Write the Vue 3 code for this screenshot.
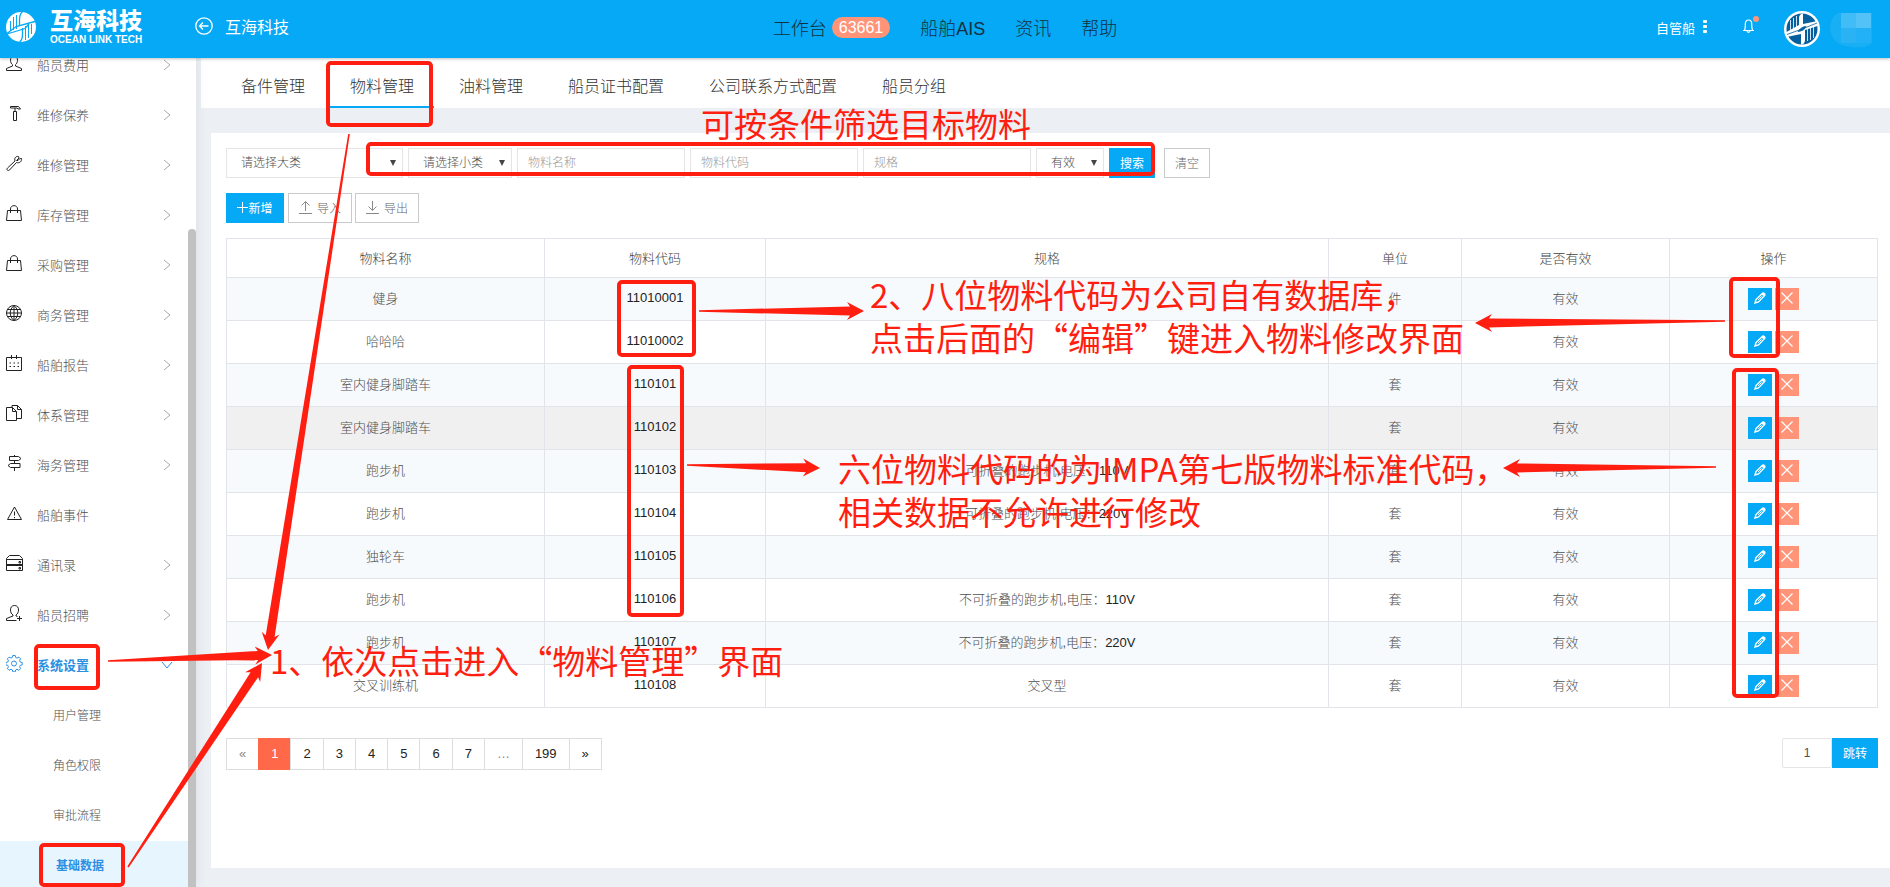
<script setup>
import { ref } from 'vue'

const menu = [
  { icon: 'user', label: '船员费用', arrow: true },
  { icon: 'hammer', label: '维修保养', arrow: true },
  { icon: 'wrench', label: '维修管理', arrow: true },
  { icon: 'bag', label: '库存管理', arrow: true },
  { icon: 'bag', label: '采购管理', arrow: true },
  { icon: 'globe', label: '商务管理', arrow: true },
  { icon: 'calendar', label: '船舶报告', arrow: true },
  { icon: 'files', label: '体系管理', arrow: true },
  { icon: 'sign', label: '海务管理', arrow: true },
  { icon: 'warning', label: '船舶事件', arrow: false },
  { icon: 'drawer', label: '通讯录', arrow: true },
  { icon: 'useradd', label: '船员招聘', arrow: true },
]
const submenu = ['用户管理', '角色权限', '审批流程', '基础数据']

const icons = {
  user: 'M8 1.5C5.6 1.5 4.5 3 4.5 5.2c0 2 .8 3.600 2 4.500v1.300L.5 13.500v2h15v-2l-6-2.500V9.700c1.200-.9 2-2.500 2-4.500 0-2.200-1.100-3.700-3.500-3.700z',
  hammer: 'M4.500 1.500h8l2 2.500h-2.500l-1-1h-6.500zM7.500 6.500h3v9h-3zM9 3v3.500',
  wrench: 'M10.500 5.500l2.500-2.500-.5-1.500c-2.500-.5-4.500 1.500-3.500 4.500l-7.500 7c-1.500 1.700.5 3.500 2 2l7-7.500c3 1 5.500-1 5-4l-2 .3-1.500 1.700z',
  bag: 'M1.500 5.500h13l1 10H.5zM4.500 8V4C4.500-.5 11.500-.5 11.500 4V8',
  globe: 'M8 .5a7.500 7.500 0 1 0 0 15a7.500 7.500 0 1 0 0-15zM.5 8h15M8 .5v15M8 .5c-5 4-5 11 0 15c5-4 5-11 0-15M1.500 4.500h13M1.500 11.500h13',
  calendar: 'M.5 2.500h15v13H.5zM5.500 0v4M10.500 0v4M3.500 8h1.500M7.500 8H9M11.500 8H13M3.500 11.500h1.500M7.500 11.500H9M11.500 11.500H13',
  files: 'M.5 2.500h6l4 4v9H.5zM6.500 2.500v4h4M6 2.500V.5h5.500l4 4v9h-5M11.500 .5v4h4',
  sign: 'M8.500 0v1.500M3.500 1.500h9l2.500 2l-2.500 2h-9zM8.500 5.500v3M4.500 8.500h9.500v4H4.500l-2.500-2zM8.500 12.500V16',
  warning: 'M8.500 2l7 12.500h-14zM8.500 6.500v4M8.500 12v1.200',
  drawer: 'M3.500 .5h10l3 3v12H.5v-12zM.5 4.500h16M.5 9.500h16M.5 10.500h16M13 6.500h1.500v1.500H13zM13 12.500h1.500V14H13z',
  useradd: 'M8.500 .5C5.600 .5 4.500 2.500 4.500 5c0 2.500 1 4 2.500 5v1L.5 13.500v2h10M8.500 .5c2.900 0 4 2 4 4.500 0 2.500-1 4-2.500 5v1l1.500 .5M13.500 11v5M11 13.500h5',
}

const tabs = ['备件管理', '物料管理', '油料管理', '船员证书配置', '公司联系方式配置', '船员分组']
const fields = ['物料名称', '物料代码', '规格']
const rows = [
  ['健身', '11010001', '', '', '件'],
  ['哈哈哈', '11010002', '', '', ''],
  ['室内健身脚踏车', '110101', '', '', '套'],
  ['室内健身脚踏车', '110102', '', '', '套'],
  ['跑步机', '110103', '可折叠的跑步机,电压：', '110V', '套'],
  ['跑步机', '110104', '可折叠的跑步机,电压：', '220V', '套'],
  ['独轮车', '110105', '', '', '套'],
  ['跑步机', '110106', '不可折叠的跑步机,电压：', '110V', '套'],
  ['跑步机', '110107', '不可折叠的跑步机,电压：', '220V', '套'],
  ['交叉训练机', '110108', '交叉型', '', '套'],
]
const pages = ['«', '1', '2', '3', '4', '5', '6', '7', '…', '199', '»']
const page = ref(1)

// Highlight frames as [left, top, right, bottom]
const frames = [
  [326, 61, 433, 127],
  [366, 142, 1155, 176],
  [617, 280, 696, 357],
  [627, 365, 684, 617],
  [1729, 277, 1780, 358],
  [1732, 368, 1779, 698],
  [34, 644, 100, 690],
  [39, 843, 125, 887],
]

// Tapered arrow from a tail point to a tip
function arrow([x1, y1, x2, y2]) {
  const len = Math.hypot(x2 - x1, y2 - y1)
  const ux = (x2 - x1) / len
  const uy = (y2 - y1) / len
  const at = (back, side) =>
    `${(x2 - ux * back - uy * side).toFixed(1)},${(y2 - uy * back + ux * side).toFixed(1)}`
  return [at(len, 0.8), at(14, 4.5), at(17, 9), at(0, 0), at(17, -9), at(14, -4.5), at(len, -0.8)].join(' ')
}
const arrows = [
  [349, 134, 268, 650],
  [108, 661, 272, 655],
  [128, 867, 262, 663],
  [699, 311, 864, 311],
  [687, 465, 820, 468],
  [1725, 321, 1475, 323],
  [1716, 467, 1503, 468],
].map(arrow)

const notes = [
  [701, 137, '可按条件筛选目标物料'],
  [870, 308, '2、八位物料代码为公司自有数据库，'],
  [870, 351, '点击后面的“编辑”键进入物料修改界面'],
  [838, 482, '六位物料代码的为IMPA第七版物料标准代码，'],
  [838, 525, '相关数据不允许进行修改'],
  [270, 674, '1、依次点击进入“物料管理”界面'],
]
</script>

<template>
  <div class="page">
    <header class="top">
      <div class="top-left">
        <a class="brand" href="#">
          <svg class="brand-mark" viewBox="0 0 30 30" width="30" height="30" aria-hidden="true">
            <circle cx="15" cy="15" r="15" fill="#fff" />
            <g fill="none" stroke="#06a9f6">
              <path d="M4.500 9v10M7.500 5v13M10.500 3v14M19.500 14v14M22.500 13v13M25.500 12v10" />
              <path d="M16.500 0C13 2 13.500 6 13.500 10v3.500M13.500 30C17 28 16.500 24 16.500 20v-4" stroke-width="1.300" />
              <path d="M1 21.500L10 14.500 29 9.500M1 22l18-5.500 4-4.500" stroke-width="1.300" />
            </g>
          </svg>
          <span class="brand-text">
            <strong>互海科技</strong>
            <small>OCEAN LINK TECH</small>
          </span>
        </a>
        <button class="back" type="button" aria-label="返回">
          <svg viewBox="0 0 18 18" width="18" height="18" fill="none" stroke="#fff" stroke-width="1.300">
            <circle cx="9" cy="9" r="8.200" />
            <path d="M13.500 9h-9M8 5.500L4.500 9L8 12.500" />
          </svg>
        </button>
        <b class="company">互海科技</b>
      </div>
      <nav class="top-nav">
        <a href="#">工作台<span class="badge">63661</span></a>
        <a href="#">船舶AIS</a>
        <a href="#">资讯</a>
        <a href="#">帮助</a>
      </nav>
      <div class="top-right">
        <button class="fleet" type="button">
          自管船
          <svg viewBox="0 0 4 14" width="4" height="14" fill="#fff">
            <rect y="0" width="4" height="3" rx="1" /><rect y="5" width="4" height="3" rx="1" /><rect y="10" width="4" height="3" rx="1" />
          </svg>
        </button>
        <button class="bell" type="button" aria-label="通知">
          <svg viewBox="0 0 18 18" width="18" height="18" fill="none">
            <path d="M2 14.500h11M3.500 14.500c1-2 .8-4 .8-6C4.300 5.500 5.500 4 7.500 4s3.300 1.500 3.300 4.500c0 2-.2 4 .8 6M6 15c.3 1.700 2.700 1.700 3 0" stroke="#fff" stroke-width="1.200" />
            <circle cx="15" cy="3" r="3" fill="#ff9478" />
          </svg>
        </button>
        <a class="avatar" href="#" aria-label="账户">
          <svg viewBox="0 0 36 36" width="36" height="36">
            <circle cx="18" cy="18" r="18" fill="#fff" />
            <circle cx="18" cy="18" r="15.500" fill="#075f9e" />
            <path d="M6.500 9v14M9.500 7v14M12.500 5v15M23.500 16v14M26.500 15v14M29.500 14v13" stroke="#cfe2ef" />
            <path d="M15 7c0-3 2-4.500 4-4.500V13l14.500-3v5L21 19v10c0 3-2 4.500-4 4.500V23L2.500 26v-5L15 14z" fill="#fff" />
            <path d="M3 23.500l15-5.500M18 18l15-6M14 20.500c4-.5 7-2 8-5-3 0-6 2-8 5z" fill="#075f9e" stroke="#075f9e" stroke-width=".8" />
          </svg>
        </a>
        <svg class="mosaic" viewBox="0 0 50 40" width="50" height="40" aria-hidden="true">
          <path d="M8 4h34v30c-6 6-20 5-30 2C-3 31-3 10 8 4z" fill="#19aff5" />
          <rect x="11" y="4" width="15" height="15" fill="#42bcf7" />
          <rect x="26" y="4" width="15" height="15" fill="#52c2f7" />
          <rect x="11" y="19" width="15" height="15" fill="#2ab2f5" />
          <rect x="26" y="19" width="15" height="15" fill="#22b0f6" />
        </svg>
      </div>
    </header>

    <div class="body">
      <aside class="side">
        <ul class="menu">
          <li v-for="m in menu" :key="m.label">
            <a href="#">
              <svg class="icon" viewBox="0 0 17 17" width="17" height="17"><path :d="icons[m.icon]" /></svg>
              <span>{{ m.label }}</span>
              <svg v-if="m.arrow" class="chev" viewBox="0 0 8 12" width="8" height="12"><path d="M1 1l6 5-6 5" /></svg>
            </a>
          </li>
          <li>
            <a href="#" class="open">
              <svg class="icon" viewBox="0 0 17 17" width="17" height="17">
                <path d="M6.800 .5h2.400l.5 2 1.300.6 1.900-1 1.700 1.700-1 1.900.6 1.300 2 .5v2.400l-2 .5-.6 1.300 1 1.900-1.700 1.700-1.900-1-1.300.6-.5 2H6.800l-.5-2-1.300-.6-1.900 1-1.700-1.700 1-1.900-.6-1.300-2-.5V7.500l2-.5.600-1.300-1-1.900L3.100 2.100l1.900 1 1.300-.6z" />
                <circle cx="8" cy="8.500" r="2.500" />
              </svg>
              <span>系统设置</span>
              <svg class="chev down" viewBox="0 0 12 8" width="12" height="8"><path d="M1 1l5 6 5-6" /></svg>
            </a>
            <ul class="submenu">
              <li v-for="s in submenu" :key="s">
                <a href="#" :class="{ current: s === '基础数据' }">{{ s }}</a>
              </li>
            </ul>
          </li>
        </ul>
        <div class="thumb"></div>
      </aside>

      <main class="main">
        <nav class="tabs">
          <a v-for="t in tabs" :key="t" href="#" :class="{ on: t === '物料管理' }">{{ t }}</a>
        </nav>
        <section class="card">
          <form class="filters" @submit.prevent>
            <div class="select wide">
              <select aria-label="大类"><option>请选择大类</option></select>
              <svg viewBox="0 0 6 6" width="6" height="6"><path d="M0 0h6L3 6z" /></svg>
            </div>
            <div class="select mid">
              <select aria-label="小类"><option>请选择小类</option></select>
              <svg viewBox="0 0 6 6" width="6" height="6"><path d="M0 0h6L3 6z" /></svg>
            </div>
            <input v-for="f in fields" :key="f" type="text" :placeholder="f" :aria-label="f" />
            <div class="select small">
              <select aria-label="是否有效"><option>有效</option></select>
              <svg viewBox="0 0 6 6" width="6" height="6"><path d="M0 0h6L3 6z" /></svg>
            </div>
            <button class="btn primary" type="submit">搜索</button>
            <button class="btn clear" type="reset">清空</button>
          </form>
          <div class="actions">
            <button class="btn primary add" type="button">
              <svg viewBox="0 0 11 11" width="11" height="11"><path d="M5.500 0v11M0 5.500h11" stroke="#fff" /></svg>新增
            </button>
            <button class="btn io" type="button">
              <svg viewBox="0 0 13 13" width="13" height="13"><path d="M0 12.500h13M6.500 10V1M2.500 4.500l4-4 4 4" /></svg>导入
            </button>
            <button class="btn io" type="button">
              <svg viewBox="0 0 13 13" width="13" height="13"><path d="M0 12.500h13M6.500 0v9M2.500 5.500l4 4 4-4" /></svg>导出
            </button>
          </div>

          <table>
            <colgroup>
              <col class="c1" /><col class="c2" /><col class="c3" /><col class="c4" /><col class="c5" /><col class="c5" />
            </colgroup>
            <thead>
              <tr><th>物料名称</th><th>物料代码</th><th>规格</th><th>单位</th><th>是否有效</th><th>操作</th></tr>
            </thead>
            <tbody>
              <tr v-for="r in rows" :key="r[1]" :class="{ hover: r[1] === '110102' }">
                <td>{{ r[0] }}</td>
                <td class="dark">{{ r[1] }}</td>
                <td>{{ r[2] }}<span class="dark">{{ r[3] }}</span></td>
                <td>{{ r[4] }}</td>
                <td>有效</td>
                <td class="ops">
                  <div>
                    <button class="edit" type="button" aria-label="编辑">
                      <svg viewBox="0 0 12 12" width="12" height="12" fill="none" stroke="#fff">
                        <path d="M1 11l1-3.500L8.500 1.200c1-.8 3 .8 2.200 2.200L4.500 10z" stroke-width="1.400" />
                        <path d="M4.200 7.800l3.500-3.500" stroke-width="1" /><path d="M8 1.500l2.500 2.500" stroke-width="1.800" />
                      </svg>
                    </button>
                    <button class="del" type="button" aria-label="删除">
                      <svg viewBox="0 0 12 12" width="12" height="12" fill="none" stroke="#fff"><path d="M.5 .5l11 11M11.500 .5l-11 11" stroke-width="1.200" /></svg>
                    </button>
                  </div>
                </td>
              </tr>
            </tbody>
          </table>

          <div class="pager">
            <div class="pages">
              <button v-for="p in pages" :key="p" type="button" :class="{ on: p === '1', muted: p === '«' || p === '…' }">{{ p }}</button>
            </div>
            <form class="jump" @submit.prevent>
              <input v-model="page" type="text" aria-label="页码" />
              <button class="btn primary" type="submit">跳转</button>
            </form>
          </div>
        </section>
      </main>
    </div>

    <svg class="notes" width="1890" height="887">
      <rect
        v-for="(f, i) in frames" :key="'f' + i"
        :x="f[0] + 2" :y="f[1] + 2" :width="f[2] - f[0] - 4" :height="f[3] - f[1] - 4" rx="3"
      />
      <polygon v-for="(a, i) in arrows" :key="'a' + i" :points="a" />
      <text v-for="n in notes" :key="n[2]" :x="n[0]" :y="n[1]">{{ n[2] }}</text>
    </svg>
  </div>
</template>

<style>
body {
  margin: 0;
  background: #ecf0f5;
}
</style>

<style scoped>
.page {
  position: relative;
  display: flex;
  flex-direction: column;
  height: 100vh;
  overflow: hidden;
  font-family: "Liberation Sans", "Noto Sans CJK SC", sans-serif;
  font-size: 13px;
  font-weight: 300;
  color: #505050;
}
* { box-sizing: border-box; }
a { color: inherit; text-decoration: none; }
button, input, select { font: inherit; color: inherit; margin: 0; }
button { cursor: pointer; padding: 0; border: 0; background: none; }
ul { list-style: none; margin: 0; padding: 0; }
svg { display: block; flex: none; }

.top {
  position: relative;
  z-index: 1;
  flex: none;
  display: grid;
  grid-template-columns: 1fr auto 1fr;
  align-items: center;
  height: 58px;
  background: #06a9f6;
  box-shadow: 0 1px 3px rgba(0, 0, 0, .25);
  color: #fff;
}
.top-left { display: flex; align-items: center; padding-left: 6px; }
.brand { display: flex; align-items: center; gap: 14px; width: 189px; }
.brand-mark { margin-top: -4px; }
.brand-text { display: flex; flex-direction: column; }
.brand-text strong { font-size: 23px; line-height: 28px; font-weight: 900; }
.brand-text small { font-size: 10px; line-height: 10px; font-weight: 700; padding-bottom: 6px; }
.back { padding-bottom: 6px; }
.company { margin-left: 12px; padding-bottom: 6px; font-size: 16px; }
.top-nav { display: flex; gap: 30px; font-size: 18px; color: #12303f; padding-bottom: 4px; }
.top-nav a { display: flex; align-items: center; }
.badge {
  margin-left: 5px;
  padding: 0 7px;
  border-radius: 11px;
  background: #ff9478;
  color: #fff;
  font-size: 16px;
  line-height: 21px;
  font-weight: 400;
}
.top-right { display: flex; align-items: center; justify-content: flex-end; padding-right: 10px; }
.fleet { display: flex; align-items: center; gap: 8px; margin-right: 34px; padding-bottom: 4px; font-weight: 400; }
.bell { margin-right: 25px; padding-bottom: 8px; }
.avatar { margin-right: 10px; }

.body { flex: 1; display: flex; min-height: 0; }
.side {
  position: relative;
  flex: none;
  width: 196px;
  overflow: hidden;
  background: #fff;
  box-shadow: 0 0 12px rgba(0, 0, 0, .08);
}
.menu { margin-top: -17px; }
.menu a { display: flex; align-items: center; height: 50px; padding: 0 25px 3px 6px; }
.menu a span { flex: 1; }
.icon { width: 17px; margin: -2px 14px 0 0; fill: none; stroke: #222; }
.chev { fill: none; stroke: #aaa; stroke-width: 1; }
.menu .open { color: #2b8fe2; font-weight: 700; padding-right: 23px; }
.open svg { stroke: #2b8fe2; }
.menu .submenu a { padding-left: 53px; font-size: 12px; }
.menu .submenu .current { padding-left: 56px; background: #e7f5ff; color: #2b8fe2; font-weight: 700; }
.thumb { position: absolute; right: 0; top: 171px; bottom: 0; width: 8px; border-radius: 4px 4px 0 0; background: #c1c1c1; }

.main { flex: 1; min-width: 0; display: flex; flex-direction: column; padding-left: 5px; }
.tabs { flex: none; display: flex; gap: 5px; height: 50px; padding-left: 20px; background: #fff; font-size: 16px; color: #333; }
.tabs a { padding: 8px 20px 0; line-height: 42px; }
.tabs .on { border-bottom: 2px solid #06a9f6; }
.card { flex: 1; margin: 25px 0 19px 10px; padding: 15px 12px 0 15px; background: #fff; }

.filters, .actions { display: flex; font-size: 12px; }
.filters { gap: 5px; }
.select { position: relative; }
.select select {
  appearance: none;
  width: 100%;
  height: 30px;
  padding: 0 14px;
  border: 1px solid #e5e5e5;
  border-radius: 0;
  background: #fff;
}
.select svg { position: absolute; right: 7px; top: 12px; fill: #444; pointer-events: none; }
.wide { width: 177px; }
.mid { width: 104px; }
.small { width: 68px; }
.filters input { width: 168px; height: 30px; padding: 0 10px; border: 1px solid #e5e5e5; }
.filters input::placeholder { color: #999; opacity: 1; }
.btn {
  display: flex;
  align-items: center;
  justify-content: center;
  width: 46px;
  height: 30px;
  padding-bottom: 2px;
  border: 1px solid #c8cacc;
  background: #fff;
  color: #666;
  font-size: 12px;
}
.primary { border-color: #06a9f6; background: #06a9f6; color: #fff; font-weight: 400; }
.clear { margin-left: 4px; }
.actions { gap: 3px; margin: 15px 0; }
.add { width: 58px; margin-right: 1px; }
.io { width: 64px; gap: 5px; }
.io svg { fill: none; stroke: #888; }

table { width: 100%; table-layout: fixed; border-collapse: collapse; text-align: center; }
.c1 { width: 318px; }
.c2 { width: 221px; }
.c4 { width: 133px; }
.c5 { width: 208px; }
th, td { border: 1px solid #e1e5e9; padding: 0; }
th { height: 39px; padding-bottom: 2px; font-weight: 300; color: #444; }
td { height: 43px; padding-bottom: 4px; }
td.ops { padding: 0; }
tbody tr:nth-child(odd) { background: #f6fafd; }
tbody tr.hover { background: #f0f0f0; }
.dark { color: #222; font-weight: 400; }
.ops div { display: flex; justify-content: center; gap: 3px; }
.ops button { display: flex; align-items: center; justify-content: center; width: 24px; height: 22px; padding-bottom: 2px; }
.edit { background: #06a9f6; }
.del { background: #ff9478; }

.pager { display: flex; justify-content: space-between; align-items: flex-start; margin-top: 30px; }
.pages { display: flex; }
.pages button { height: 32px; padding: 0 12px 2px; border: 1px solid #ddd; color: #222; font-weight: 400; background: #fff; }
.pages button + button { margin-left: -1px; }
.pages .muted { color: #888; }
.pages .on { border-color: #ff6849; background: #ff6849; color: #fff; }
.jump { display: flex; }
.jump input { width: 50px; height: 30px; border: 1px solid #e5e5e5; border-radius: 2px; text-align: center; font-size: 12px; }

.notes { position: absolute; z-index: 2; left: 0; top: 0; pointer-events: none; }
.notes rect { fill: none; stroke: #ff1e10; stroke-width: 4; }
.notes polygon { fill: #ff1e10; }
.notes text { font-family: "Noto Sans CJK SC", sans-serif; font-size: 33px; font-weight: 400; fill: #ff1e10; }
</style>
